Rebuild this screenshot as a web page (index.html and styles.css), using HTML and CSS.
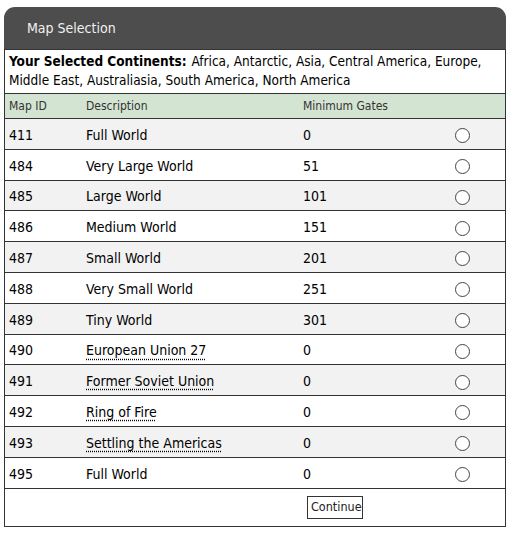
FILE: index.html
```html
<!DOCTYPE html>
<html>
<head>
<meta charset="utf-8">
<link rel="stylesheet" href="styles.css">
</head>
<body>
<div class="panel">
  <div class="panel-title">Map Selection</div>
  <table class="maps">
    <tr class="continents"><td colspan="4"><b>Your Selected Continents:</b> Africa, Antarctic, Asia, Central America, Europe, Middle East, Australiasia, South America, North America</td></tr>
    <tr class="head"><th class="c-id">Map ID</th><th class="c-desc">Description</th><th class="c-gates">Minimum Gates</th><th class="c-pick"></th></tr>
    <tr class="odd"><td>411</td><td>Full World</td><td>0</td><td class="c-pick"><span class="radio"></span></td></tr>
    <tr><td>484</td><td>Very Large World</td><td>51</td><td class="c-pick"><span class="radio"></span></td></tr>
    <tr class="odd"><td>485</td><td>Large World</td><td>101</td><td class="c-pick"><span class="radio"></span></td></tr>
    <tr><td>486</td><td>Medium World</td><td>151</td><td class="c-pick"><span class="radio"></span></td></tr>
    <tr class="odd"><td>487</td><td>Small World</td><td>201</td><td class="c-pick"><span class="radio"></span></td></tr>
    <tr><td>488</td><td>Very Small World</td><td>251</td><td class="c-pick"><span class="radio"></span></td></tr>
    <tr class="odd"><td>489</td><td>Tiny World</td><td>301</td><td class="c-pick"><span class="radio"></span></td></tr>
    <tr><td>490</td><td><span class="abbr">European Union 27</span></td><td>0</td><td class="c-pick"><span class="radio"></span></td></tr>
    <tr class="odd"><td>491</td><td><span class="abbr">Former Soviet Union</span></td><td>0</td><td class="c-pick"><span class="radio"></span></td></tr>
    <tr><td>492</td><td><span class="abbr">Ring of Fire</span></td><td>0</td><td class="c-pick"><span class="radio"></span></td></tr>
    <tr class="odd"><td>493</td><td><span class="abbr">Settling the Americas</span></td><td>0</td><td class="c-pick"><span class="radio"></span></td></tr>
    <tr><td>495</td><td>Full World</td><td>0</td><td class="c-pick"><span class="radio"></span></td></tr>
    <tr class="foot"><td colspan="4"><button class="btn">Continue</button></td></tr>
  </table>
</div>
</body>
</html>
```
FILE: styles.css
```css
html, body { margin: 0; padding: 0; background: #fff; }
body { padding: 7px 6px 0 4px; font-family: "DejaVu Sans Condensed", "DejaVu Sans", sans-serif; color: #000; }
.panel { width: 502px; }
.panel-title {
  background: #4d4d4d;
  color: #f0f0f0;
  height: 42px;
  line-height: 42px;
  padding-left: 23px;
  font-size: 14px;
  border-radius: 11px 11px 0 0;
}
.maps {
  width: 502px;
  border-collapse: collapse;
  border: 1px solid #333;
  font-size: 14px;
}
.maps td, .maps th { border-top: 1px solid #333; padding: 0 0 0 4px; text-align: left; }
.maps tr.continents td { height: 38px; line-height: 19px; padding: 2px 4px 3px 4px; font-size: 13.5px; }
.maps tr.continents b { margin-right: 1px; }
.maps tr.head th { background: #d3e4d2; font-weight: normal; font-size: 12px; color: #333; height: 24px; }
.maps tr td { height: 27.8px; padding-top: 2px; }
.maps tr.odd td { background: #f2f2f2; }
.c-id { width: 73px; }
.c-desc { width: 213px; }
.c-gates { width: 140px; }
.maps td.c-pick { text-align: left; padding-left: 12px; }
.radio {
  display: inline-block;
  width: 13px; height: 13px;
  border: 1px solid #444;
  border-radius: 50%;
  background: #fff;
  vertical-align: middle;
}
.abbr { text-decoration: underline dotted; text-underline-offset: 3px; }
.maps tr.foot td { text-align: left; padding: 0 0 0 302px; height: 37px; }
.btn {
  font-family: inherit;
  font-size: 12.5px;
  background: #fff;
  border: 1px solid #333;
  padding: 2px 3px 3px;
  color: #222;
  width: 56px;
  height: 23px;
}
```
